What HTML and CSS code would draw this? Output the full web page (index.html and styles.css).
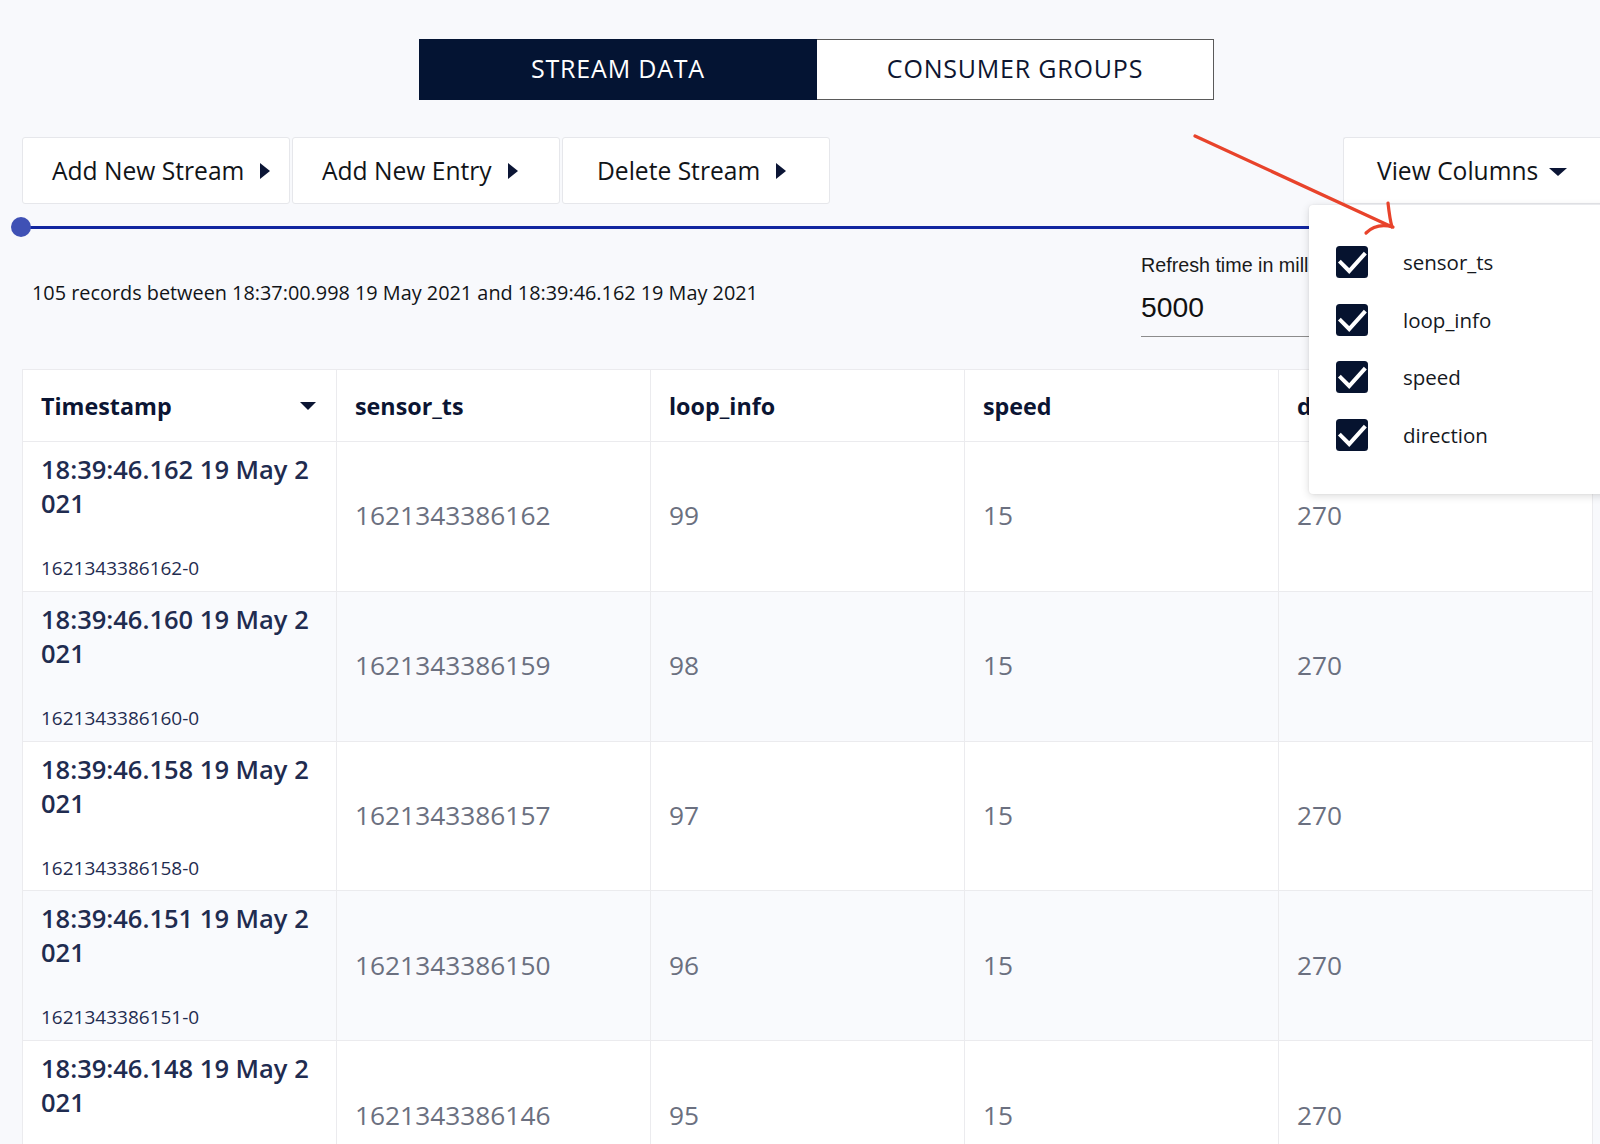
FILE: index.html
```html
<!DOCTYPE html>
<html lang="en">
<head>
<meta charset="utf-8">
<title>Stream Data</title>
<link rel="stylesheet" href="styles.css">
</head>
<body>
<div class="page">
  <div class="tabs">
    <div class="tab tab-active">STREAM DATA</div>
    <div class="tab">CONSUMER GROUPS</div>
  </div>

  <div class="toolbar">
    <div class="btn">Add New Stream<span class="tri-right"></span></div>
    <div class="btn">Add New Entry<span class="tri-right"></span></div>
    <div class="btn btn-del">Delete Stream<span class="tri-right"></span></div>
    <div class="btn btn-view">View Columns<span class="tri-down"></span></div>
  </div>

  <div class="slider">
    <div class="slider-track"></div>
    <div class="slider-thumb"></div>
  </div>

  <div class="info">
    <div class="records">105 records between 18:37:00.998 19 May 2021 and 18:39:46.162 19 May 2021</div>
    <div class="field">
      <div class="field-label">Refresh time in milliseconds</div>
      <div class="field-input">5000</div>
    </div>
  </div>

  <table class="grid">
    <thead>
      <tr>
        <th><div class="th-sort"><span>Timestamp</span><span class="tri-sort"></span></div></th>
        <th>sensor_ts</th>
        <th>loop_info</th>
        <th>speed</th>
        <th>direction</th>
      </tr>
    </thead>
    <tbody>
      <tr>
        <td class="ts"><div class="ts-time">18:39:46.162 19 May 2<br>021</div><div class="ts-id">1621343386162-0</div></td>
        <td>1621343386162</td><td>99</td><td>15</td><td>270</td>
      </tr>
      <tr class="alt">
        <td class="ts"><div class="ts-time">18:39:46.160 19 May 2<br>021</div><div class="ts-id">1621343386160-0</div></td>
        <td>1621343386159</td><td>98</td><td>15</td><td>270</td>
      </tr>
      <tr>
        <td class="ts"><div class="ts-time">18:39:46.158 19 May 2<br>021</div><div class="ts-id">1621343386158-0</div></td>
        <td>1621343386157</td><td>97</td><td>15</td><td>270</td>
      </tr>
      <tr class="alt">
        <td class="ts"><div class="ts-time">18:39:46.151 19 May 2<br>021</div><div class="ts-id">1621343386151-0</div></td>
        <td>1621343386150</td><td>96</td><td>15</td><td>270</td>
      </tr>
      <tr>
        <td class="ts"><div class="ts-time">18:39:46.148 19 May 2<br>021</div><div class="ts-id">1621343386148-0</div></td>
        <td>1621343386146</td><td>95</td><td>15</td><td>270</td>
      </tr>
    </tbody>
  </table>

  <div class="menu">
    <div class="menu-item"><svg class="cb" viewBox="0 0 32 32"><rect x="0" y="0" width="32" height="32" rx="3.5"/><polyline points="4.8,16.6 13.2,25 28,8.6"/></svg><span>sensor_ts</span></div>
    <div class="menu-item"><svg class="cb" viewBox="0 0 32 32"><rect x="0" y="0" width="32" height="32" rx="3.5"/><polyline points="4.8,16.6 13.2,25 28,8.6"/></svg><span>loop_info</span></div>
    <div class="menu-item"><svg class="cb" viewBox="0 0 32 32"><rect x="0" y="0" width="32" height="32" rx="3.5"/><polyline points="4.8,16.6 13.2,25 28,8.6"/></svg><span>speed</span></div>
    <div class="menu-item"><svg class="cb" viewBox="0 0 32 32"><rect x="0" y="0" width="32" height="32" rx="3.5"/><polyline points="4.8,16.6 13.2,25 28,8.6"/></svg><span>direction</span></div>
  </div>

  <svg class="annot" viewBox="0 0 1600 300" width="1600" height="300">
    <path d="M1195 136 L1390 226"/>
    <path d="M1388 203 C1389 212 1390 220 1392 227"/>
    <path d="M1366 233 C1373 226 1382 224 1393 227"/>
  </svg>
</div>
</body>
</html>
```

FILE: styles.css
```css
* { box-sizing: border-box; }
html, body { margin: 0; padding: 0; }
body {
  background: #f8f9fc;
  font-family: "Open Sans", "Noto Sans", sans-serif;
  color: #111418;
  width: 1600px;
  height: 1144px;
  overflow: hidden;
}
.page { position: relative; width: 1600px; }

.tabs {
  display: flex;
  padding: 39px 0 0 419px;
}
.tab {
  width: 397px;
  height: 61px;
  display: flex;
  align-items: center;
  justify-content: center;
  padding-bottom: 4px;
  font-size: 25px;
  letter-spacing: 0.8px;
  background: #fff;
  color: #0d1530;
  border: 1px solid #5a5a5a;
  border-left: none;
}
.tab-active {
  width: 398px;
  background: #041433;
  color: #fff;
  border: 1px solid #041433;
}

.toolbar {
  display: flex;
  gap: 2px;
  margin-top: 37px;
  padding-left: 22px;
}
.btn {
  width: 268px;
  height: 67px;
  background: #fff;
  border: 1px solid #e6e7eb;
  border-radius: 3px;
  display: flex;
  align-items: center;
  padding-left: 29px;
  font-size: 24.6px;
  color: #111418;
}
.btn-del { padding-left: 34px; }
.tri-right {
  width: 0; height: 0;
  margin-left: 16px;
  border-top: 8px solid transparent;
  border-bottom: 8px solid transparent;
  border-left: 10px solid #0b1535;
}
.btn-view {
  margin-left: auto;
  width: 257px;
  border-right: none;
  border-radius: 3px 0 0 3px;
  padding-left: 33px;
}
.tri-down {
  width: 0; height: 0;
  margin-left: 11px;
  margin-top: 2px;
  border-left: 9px solid transparent;
  border-right: 9px solid transparent;
  border-top: 8px solid #0b1535;
}

.slider {
  position: relative;
  height: 20px;
  margin-top: 13px;
}
.slider-track {
  position: absolute;
  left: 21px;
  right: 0;
  top: 8.5px;
  height: 3px;
  background: #1226a0;
}
.slider-thumb {
  position: absolute;
  left: 11px;
  top: 0;
  width: 20px;
  height: 20px;
  border-radius: 50%;
  background: #3f51b5;
}

.info {
  display: flex;
  justify-content: space-between;
  align-items: flex-start;
  padding: 0 39px 0 32px;
  margin-bottom: 32.5px;
}
.records {
  margin-top: 42px;
  font-size: 19.85px;
  line-height: 27px;
  color: #111418;
}
.field {
  width: 420px;
  margin-top: 15.5px;
  font-family: "Liberation Sans", Arial, sans-serif;
}
.field-label {
  font-size: 19.7px;
  line-height: 24px;
  color: #1a1a1a;
  white-space: nowrap;
}
.field-input {
  margin-top: 13px;
  font-size: 28.3px;
  line-height: 34px;
  color: #111;
  padding-bottom: 12px;
  border-bottom: 1px solid #8c8c8c;
}

.grid {
  margin-left: 22px;
  width: 1571px;
  border-collapse: collapse;
  table-layout: fixed;
  background: #fff;
}
.grid th, .grid td {
  border: 1px solid #ebebee;
  padding: 0 18px;
  text-align: left;
}
.grid th {
  height: 72px;
  padding-bottom: 0;
  font-size: 23.3px;
  font-weight: 700;
  color: #0b1533;
  vertical-align: middle;
}
.th-sort {
  display: flex;
  align-items: center;
  justify-content: space-between;
  padding-right: 2px;
}
.tri-sort {
  width: 0; height: 0;
  border-left: 8px solid transparent;
  border-right: 8px solid transparent;
  border-top: 8px solid #0b1533;
}
.grid td {
  height: 149.8px;
  padding-bottom: 2px;
  font-size: 26.3px;
  color: #6b7080;
  vertical-align: middle;
}
.grid tr.alt td { background: #f9fafd; }
.grid td.ts {
  vertical-align: top;
  padding-top: 10px;
  padding-bottom: 0;
}
.ts-time {
  font-size: 25.5px;
  font-weight: 600;
  line-height: 34px;
  color: #1f2c50;
}
.ts-id {
  margin-top: 36px;
  font-size: 19px;
  line-height: 24px;
  color: #1f2c50;
}

.menu {
  position: absolute;
  left: 1309px;
  top: 205px;
  width: 300px;
  height: 289px;
  background: #fff;
  border-radius: 4px;
  box-shadow: 0 2px 8px rgba(0, 0, 0, 0.14), 0 0 2px rgba(0, 0, 0, 0.08);
  padding: 41px 0 0 27px;
  display: flex;
  flex-direction: column;
  gap: 25.6px;
}
.menu-item {
  display: flex;
  align-items: center;
  height: 32px;
  font-size: 20.5px;
  color: #15181e;
}
.cb {
  width: 32px;
  height: 32px;
  margin-right: 35px;
  flex: none;
}
.cb rect { fill: #06132f; }
.cb polyline {
  fill: none;
  stroke: #fff;
  stroke-width: 4;
  stroke-linecap: square;
  stroke-linejoin: miter;
}

.annot {
  position: absolute;
  left: 0;
  top: 0;
  pointer-events: none;
}
.annot path {
  fill: none;
  stroke: #e8432b;
  stroke-width: 3.2;
  stroke-linecap: round;
}
```
